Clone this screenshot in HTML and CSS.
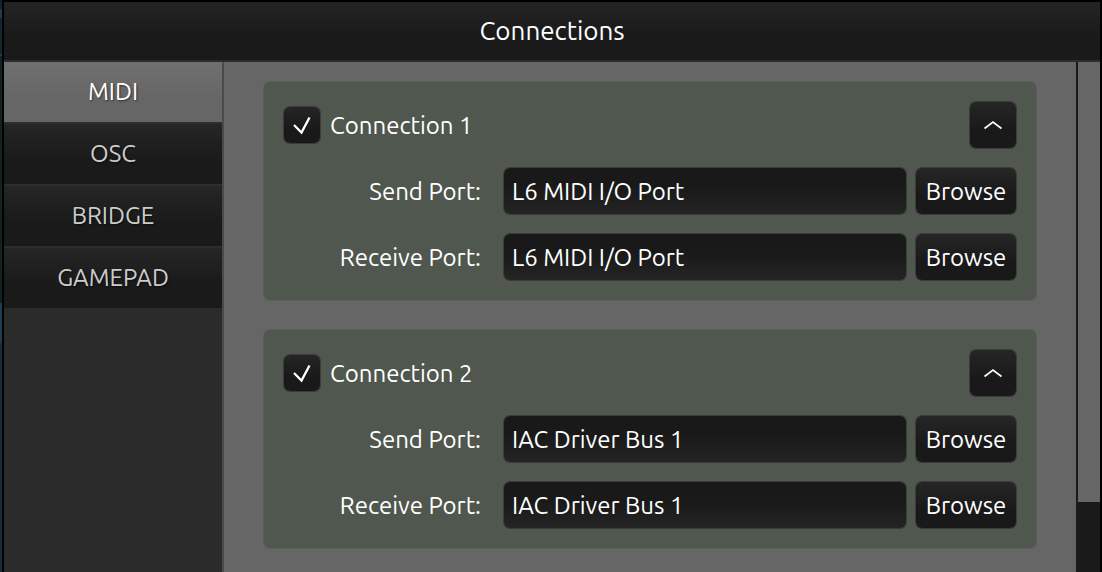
FILE: index.html
```html
<!DOCTYPE html>
<html lang="en">
<head>
<meta charset="utf-8">
<title>Connections</title>
<link rel="stylesheet" href="styles.css">
</head>
<body>
<div class="window">
  <header class="titlebar"><h1>Connections</h1></header>
  <div class="body">
    <nav class="tabs">
      <button type="button" class="tab active">MIDI</button>
      <button type="button" class="tab">OSC</button>
      <button type="button" class="tab">BRIDGE</button>
      <button type="button" class="tab">GAMEPAD</button>
    </nav>
    <main class="content">
      <section class="card">
        <div class="card-head">
          <label class="toggle"><input type="checkbox" class="check" checked><svg class="tick" viewBox="0 0 36 36" aria-hidden="true"><path d="M10 18 L17.5 25.500 L25.500 10.500"/></svg><span class="title">Connection 1</span></label>
          <button type="button" class="button fold" aria-label="Collapse Connection 1"><svg viewBox="0 0 46 46" aria-hidden="true"><path d="M14.500 26.500 L23 20 L31.500 26.500"/></svg></button>
        </div>
        <div class="row">
          <label class="name" for="send1">Send Port:</label>
          <input class="field" id="send1" type="text" value="L6 MIDI I/O Port">
          <button type="button" class="button browse">Browse</button>
        </div>
        <div class="row">
          <label class="name" for="receive1">Receive Port:</label>
          <input class="field" id="receive1" type="text" value="L6 MIDI I/O Port">
          <button type="button" class="button browse">Browse</button>
        </div>
      </section>
      <section class="card">
        <div class="card-head">
          <label class="toggle"><input type="checkbox" class="check" checked><svg class="tick" viewBox="0 0 36 36" aria-hidden="true"><path d="M10 18 L17.5 25.500 L25.500 10.500"/></svg><span class="title">Connection 2</span></label>
          <button type="button" class="button fold" aria-label="Collapse Connection 2"><svg viewBox="0 0 46 46" aria-hidden="true"><path d="M14.500 26.500 L23 20 L31.500 26.500"/></svg></button>
        </div>
        <div class="row">
          <label class="name" for="send2">Send Port:</label>
          <input class="field" id="send2" type="text" value="IAC Driver Bus 1">
          <button type="button" class="button browse">Browse</button>
        </div>
        <div class="row">
          <label class="name" for="receive2">Receive Port:</label>
          <input class="field" id="receive2" type="text" value="IAC Driver Bus 1">
          <button type="button" class="button browse">Browse</button>
        </div>
      </section>
    </main>
    <div class="scrollbar"><div class="thumb"></div></div>
  </div>
</div>
</body>
</html>
```
FILE: styles.css
```css
* { box-sizing: border-box; }

body {
  margin: 0;
  padding-left: 2px;
  background: linear-gradient(#17212a 0 9px, #1d3d55 9px 18px, #17252a 18px 54px, #1d3d55 54px 56px, #142023 56px 303px, #1d3d55 303px 343px, #1b2a38 343px);
  color: #fff;
  font-family: Ubuntu, "Noto Sans", sans-serif;
  font-size: 24px;
  line-height: 30px;
}

button, input { font: inherit; color: inherit; border: 0; }

.window {
  display: flex;
  flex-direction: column;
  height: 100vh;
  border: 2px solid #000;
  border-bottom: 0;
  overflow: hidden;
}

.titlebar {
  flex: none;
  display: grid;
  place-items: center;
  height: 60px;
  border-bottom: 2px solid #2d2d2d;
  background: linear-gradient(#242424, #1a1a1a 60%);
}

h1 { margin: 0; font-size: 26px; font-weight: 400; }

.body { flex: 1; display: flex; min-height: 0; }

.tabs {
  flex: none;
  display: flex;
  flex-direction: column;
  width: 220px;
  border-right: 2px solid #4a4a4a;
  background: #2b2b2b;
}

.tab {
  height: 62px;
  padding: 0;
  border-top: 2px solid #2d2d2d;
  background: linear-gradient(#262626, #1a1a1a 60%);
  color: #ccc;
  text-shadow: 1px 1px 2px #0008;
}

.tab.active {
  height: 60px;
  border-top: 0;
  background: linear-gradient(#707070, #666 60%);
  color: #fff;
}

.content {
  flex: 1;
  display: flex;
  flex-direction: column;
  gap: 30px;
  padding: 20px 40px;
  overflow: hidden;
  background: #666;
}

.card {
  display: flex;
  flex: none;
  flex-direction: column;
  gap: 20px;
  padding: 20px;
  border-radius: 6px;
  background: #50574e;
  box-shadow: 0 0 0 1px #5b5f5a;
}

.card-head { display: flex; align-items: center; justify-content: space-between; }

.toggle { display: grid; grid-template-columns: 36px auto; column-gap: 10px; align-items: center; }

.check, .tick { grid-area: 1 / 1; width: 36px; height: 36px; margin: 0; }

.check {
  appearance: none;
  border-radius: 6px;
  background: linear-gradient(#252525, #191919 60%);
  box-shadow: 0 0 0 1px #393c38;
}

.tick { visibility: hidden; z-index: 1; pointer-events: none; }
.check:checked + .tick { visibility: visible; }

svg path { fill: none; stroke: #fff; stroke-width: 1.600; }
.tick path { stroke-width: 2.300; }

.button {
  height: 46px;
  padding: 0;
  border-radius: 6px;
  background: linear-gradient(#262626, #191919 60%);
  box-shadow: 0 0 0 1px #393c38;
}

.fold { width: 46px; }
.fold svg { display: block; width: 46px; height: 46px; }

.row {
  display: grid;
  grid-template-columns: 197px 1fr 100px;
  align-items: center;
}

.title, .name, .browse { padding-top: 2px; }

.name { text-align: right; }

.field {
  min-width: 0;
  height: 46px;
  margin: 0 10px 0 23px;
  padding: 0 8px;
  border-radius: 6px;
  background: linear-gradient(#191919 40%, #242424);
  box-shadow: 0 0 0 1px #393c38;
}

.scrollbar {
  flex: none;
  width: 24px;
  border-left: 2px solid #1a1a1a;
  background: #1a1a1a;
}

.thumb { height: 440px; background: #666; }
```
